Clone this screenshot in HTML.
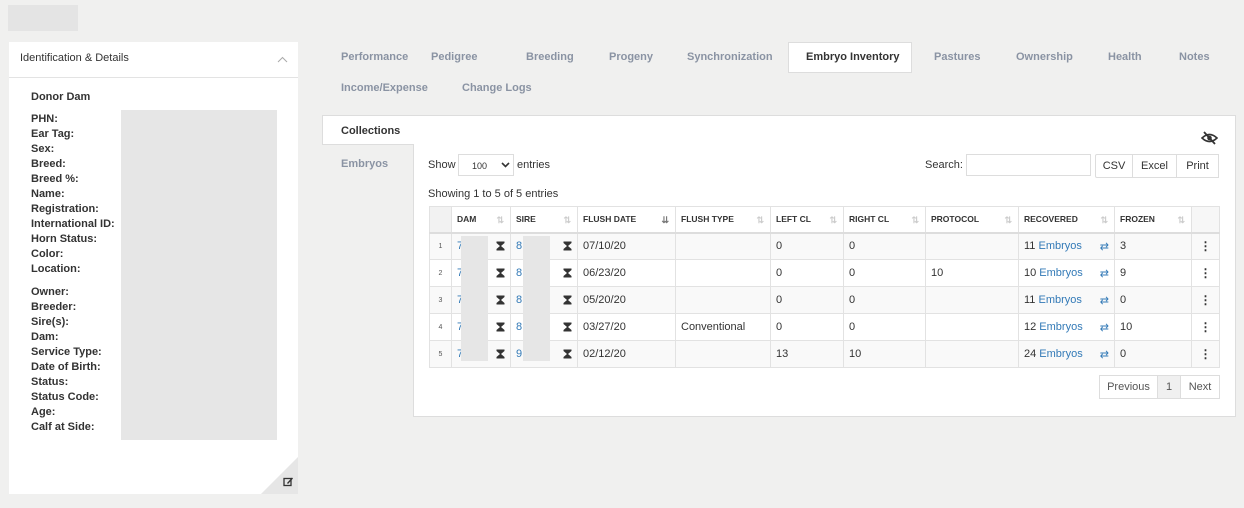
<!DOCTYPE html>
<html><head><meta charset="utf-8"><style>
*{box-sizing:border-box;margin:0;padding:0}
body{width:1244px;height:508px;background:#f0f0ef;font-family:"Liberation Sans",sans-serif;font-size:11px;color:#333;position:relative;overflow:hidden}
.a{position:absolute}
.lbl{position:absolute;left:31px;font-weight:bold;font-size:11px;color:#333}
.tab{position:absolute;top:51px;font-size:11px;color:#8a93a3;font-weight:bold}
table{border-collapse:collapse;position:absolute;left:429px;top:206px;table-layout:fixed}
td,th{border:1px solid #e2e2e2;height:27px;padding:0 5px;text-align:left;white-space:nowrap;overflow:hidden}
th{font-size:8.5px;font-weight:bold;color:#333;background:#fff;height:26px;position:relative;border-bottom:2px solid #ddd}
th .s{position:absolute;right:6px;top:8px;color:#ccc;font-size:9px}
th.idx{background:#f2f2f2}
tr.o td{background:#f9f9f9}
tr.e td{background:#fff}
td.n{font-size:7px;color:#555;text-align:center;padding:0}
a{color:#337ab7;text-decoration:none}
.hg{float:right;margin-top:1px}
.sw{float:right;color:#337ab7;font-size:11px}
.dots{text-align:center;font-weight:bold;font-size:12px}
.btn{position:absolute;border:1px solid #ddd;background:#fff;height:24px;line-height:22px;text-align:center;font-size:11px;color:#333}
</style></head><body>
<div class="a" style="left:8px;top:5px;width:70px;height:26px;background:#e4e4e4"></div>
<div class="a" style="left:9px;top:42px;width:289px;height:452px;background:#fff"></div>
<div class="a" style="left:9px;top:77px;width:289px;height:1px;background:#e3e3e3"></div>
<div class="a" style="left:20px;top:52px;font-size:11px;color:#333">Identification &amp; Details</div>
<svg class="a" style="left:277px;top:56px" width="11" height="7" viewBox="0 0 11 7"><path d="M1 6 L5.5 1.5 L10 6" fill="none" stroke="#aaa" stroke-width="1"/></svg>
<div class="lbl" style="top:91px">Donor Dam</div>
<div class="a" style="left:121px;top:110px;width:156px;height:330px;background:#e6e6e6"></div>
<div class="lbl" style="top:113px">PHN:</div>
<div class="lbl" style="top:128px">Ear Tag:</div>
<div class="lbl" style="top:143px">Sex:</div>
<div class="lbl" style="top:158px">Breed:</div>
<div class="lbl" style="top:173px">Breed %:</div>
<div class="lbl" style="top:188px">Name:</div>
<div class="lbl" style="top:203px">Registration:</div>
<div class="lbl" style="top:218px">International ID:</div>
<div class="lbl" style="top:233px">Horn Status:</div>
<div class="lbl" style="top:248px">Color:</div>
<div class="lbl" style="top:263px">Location:</div>
<div class="lbl" style="top:286px">Owner:</div>
<div class="lbl" style="top:301px">Breeder:</div>
<div class="lbl" style="top:316px">Sire(s):</div>
<div class="lbl" style="top:331px">Dam:</div>
<div class="lbl" style="top:346px">Service Type:</div>
<div class="lbl" style="top:361px">Date of Birth:</div>
<div class="lbl" style="top:376px">Status:</div>
<div class="lbl" style="top:391px">Status Code:</div>
<div class="lbl" style="top:406px">Age:</div>
<div class="lbl" style="top:421px">Calf at Side:</div>
<div class="a" style="left:261px;top:457px;width:0;height:0;border-left:37px solid transparent;border-bottom:37px solid #e6e6e6"></div>
<svg class="a" style="left:283px;top:476px" width="11" height="11" viewBox="0 0 11 11"><rect x="1" y="2.5" width="7" height="7" fill="none" stroke="#333" stroke-width="1.3"/><path d="M4 7 L9 1.5 L10 2.5 L5 8 Z" fill="#333"/></svg>

<div class="tab" style="left:341px">Performance</div>
<div class="tab" style="left:431px">Pedigree</div>
<div class="tab" style="left:526px">Breeding</div>
<div class="tab" style="left:609px">Progeny</div>
<div class="tab" style="left:687px">Synchronization</div>
<div class="a" style="left:788px;top:42px;width:124px;height:31px;background:#fff;border:1px solid #ddd"></div>
<div class="tab" style="left:806px;color:#333">Embryo Inventory</div>
<div class="tab" style="left:934px">Pastures</div>
<div class="tab" style="left:1016px">Ownership</div>
<div class="tab" style="left:1108px">Health</div>
<div class="tab" style="left:1179px">Notes</div>
<div class="tab" style="left:341px;top:82px">Income/Expense</div>
<div class="tab" style="left:462px;top:82px">Change Logs</div>

<div class="a" style="left:413px;top:115px;width:823px;height:302px;background:#fff;border:1px solid #ddd"></div>
<div class="a" style="left:322px;top:115px;width:92px;height:30px;background:#fff;border:1px solid #ddd;border-right:none"></div>
<div class="a" style="left:341px;top:125px;color:#333;font-weight:bold">Collections</div>
<div class="a" style="left:341px;top:158px;color:#8a93a3;font-weight:bold">Embryos</div>

<svg class="a" style="left:1201px;top:131px" width="17" height="14" viewBox="0 0 17 14"><path d="M1 7 Q8.5 0 16 7 Q8.5 14 1 7Z" fill="none" stroke="#333" stroke-width="1.6"/><circle cx="8.5" cy="7" r="2.3" fill="#333"/><line x1="3" y1="1" x2="14" y2="13" stroke="#333" stroke-width="1.8"/></svg>

<div class="a" style="left:428px;top:159px">Show</div>
<div class="a" style="left:458px;top:154px;width:56px;height:22px;border:1px solid #ddd;font-size:9px;padding:6px 0 0 13px">100</div>
<svg class="a" style="left:501px;top:162px" width="9" height="6" viewBox="0 0 9 6"><path d="M1 1 L4.5 4.5 L8 1" fill="none" stroke="#333" stroke-width="1.6"/></svg>
<div class="a" style="left:517px;top:159px">entries</div>
<div class="a" style="left:925px;top:159px">Search:</div>
<div class="a" style="left:966px;top:154px;width:125px;height:22px;border:1px solid #ddd"></div>
<div class="btn" style="left:1095px;top:154px;width:38px;border-radius:2px 0 0 2px">CSV</div>
<div class="btn" style="left:1132px;top:154px;width:45px">Excel</div>
<div class="btn" style="left:1176px;top:154px;width:43px">Print</div>
<div class="a" style="left:428px;top:188px">Showing 1 to 5 of 5 entries</div>

<table>
<colgroup><col style="width:22px"><col style="width:59px"><col style="width:67px"><col style="width:98px"><col style="width:95px"><col style="width:73px"><col style="width:82px"><col style="width:93px"><col style="width:96px"><col style="width:77px"><col style="width:28px"></colgroup>
<tr><th class="idx"></th><th>DAM<span class="s">⇅</span></th><th>SIRE<span class="s">⇅</span></th><th>FLUSH DATE<span class="s" style="color:#777">⇊</span></th><th>FLUSH TYPE<span class="s">⇅</span></th><th>LEFT CL<span class="s">⇅</span></th><th>RIGHT CL<span class="s">⇅</span></th><th>PROTOCOL<span class="s">⇅</span></th><th>RECOVERED<span class="s">⇅</span></th><th>FROZEN<span class="s">⇅</span></th><th class="idx" style="background:#f7f7f7"></th></tr>
<tr class="o"><td class="n">1</td><td><a>7</a><svg class="hg" width="9" height="10" viewBox="0 0 9 10"><path d="M0.5 0.5H8.5V2L5 5L8.5 8V9.5H0.5V8L4 5L0.5 2Z" fill="#333"/></svg></td><td><a>8</a><svg class="hg" width="9" height="10" viewBox="0 0 9 10"><path d="M0.5 0.5H8.5V2L5 5L8.5 8V9.5H0.5V8L4 5L0.5 2Z" fill="#333"/></svg></td><td>07/10/20</td><td></td><td>0</td><td>0</td><td></td><td>11 <a>Embryos</a><span class="sw">⇄</span></td><td>3</td><td class="dots">⋮</td></tr>
<tr class="e"><td class="n">2</td><td><a>7</a><svg class="hg" width="9" height="10" viewBox="0 0 9 10"><path d="M0.5 0.5H8.5V2L5 5L8.5 8V9.5H0.5V8L4 5L0.5 2Z" fill="#333"/></svg></td><td><a>8</a><svg class="hg" width="9" height="10" viewBox="0 0 9 10"><path d="M0.5 0.5H8.5V2L5 5L8.5 8V9.5H0.5V8L4 5L0.5 2Z" fill="#333"/></svg></td><td>06/23/20</td><td></td><td>0</td><td>0</td><td>10</td><td>10 <a>Embryos</a><span class="sw">⇄</span></td><td>9</td><td class="dots">⋮</td></tr>
<tr class="o"><td class="n">3</td><td><a>7</a><svg class="hg" width="9" height="10" viewBox="0 0 9 10"><path d="M0.5 0.5H8.5V2L5 5L8.5 8V9.5H0.5V8L4 5L0.5 2Z" fill="#333"/></svg></td><td><a>8</a><svg class="hg" width="9" height="10" viewBox="0 0 9 10"><path d="M0.5 0.5H8.5V2L5 5L8.5 8V9.5H0.5V8L4 5L0.5 2Z" fill="#333"/></svg></td><td>05/20/20</td><td></td><td>0</td><td>0</td><td></td><td>11 <a>Embryos</a><span class="sw">⇄</span></td><td>0</td><td class="dots">⋮</td></tr>
<tr class="e"><td class="n">4</td><td><a>7</a><svg class="hg" width="9" height="10" viewBox="0 0 9 10"><path d="M0.5 0.5H8.5V2L5 5L8.5 8V9.5H0.5V8L4 5L0.5 2Z" fill="#333"/></svg></td><td><a>8</a><svg class="hg" width="9" height="10" viewBox="0 0 9 10"><path d="M0.5 0.5H8.5V2L5 5L8.5 8V9.5H0.5V8L4 5L0.5 2Z" fill="#333"/></svg></td><td>03/27/20</td><td>Conventional</td><td>0</td><td>0</td><td></td><td>12 <a>Embryos</a><span class="sw">⇄</span></td><td>10</td><td class="dots">⋮</td></tr>
<tr class="o"><td class="n">5</td><td><a>7</a><svg class="hg" width="9" height="10" viewBox="0 0 9 10"><path d="M0.5 0.5H8.5V2L5 5L8.5 8V9.5H0.5V8L4 5L0.5 2Z" fill="#333"/></svg></td><td><a>9</a><svg class="hg" width="9" height="10" viewBox="0 0 9 10"><path d="M0.5 0.5H8.5V2L5 5L8.5 8V9.5H0.5V8L4 5L0.5 2Z" fill="#333"/></svg></td><td>02/12/20</td><td></td><td>13</td><td>10</td><td></td><td>24 <a>Embryos</a><span class="sw">⇄</span></td><td>0</td><td class="dots">⋮</td></tr>
</table>
<div class="a" style="left:461px;top:236px;width:27px;height:125px;background:#e6e6e6"></div>
<div class="a" style="left:523px;top:236px;width:27px;height:125px;background:#e6e6e6"></div>

<div class="btn" style="left:1099px;top:375px;width:59px;color:#555">Previous</div>
<div class="btn" style="left:1157px;top:375px;width:24px;background:#f0f0f0;color:#555">1</div>
<div class="btn" style="left:1180px;top:375px;width:40px;color:#555">Next</div>
</body></html>
